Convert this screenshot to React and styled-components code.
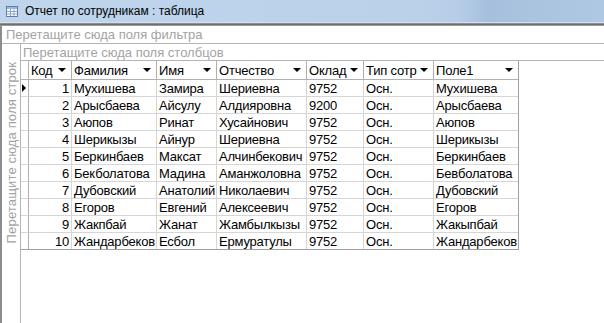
import React from "react";
import styled, { createGlobalStyle } from "styled-components";

const Global = createGlobalStyle`
  * { box-sizing: border-box; }
  html, body { margin: 0; padding: 0; background: #fff; }
  body { font-family: "Liberation Sans", Arial, sans-serif; }
`;

const Window = styled.div`
  width: 604px;
  height: 323px;
  display: flex;
  flex-direction: column;
  overflow: hidden;
  background: #fff;
`;

const TitleBar = styled.div`
  height: 23px;
  display: flex;
  align-items: center;
  gap: 7px;
  padding-left: 6px;
  font-size: 12px;
  color: #000;
  background: linear-gradient(
    to right,
    #bfd5ec 0%,
    #bad1ea 70%,
    #b6cde7 76%,
    #a5bfdc 81%,
    #a9c3df 86%,
    #aec8e3 100%
  );
  border-bottom: 1px solid #d2e2f2;
`;

const TitleRule = styled.div`
  height: 3px;
  background: linear-gradient(to bottom, #8e8e8e 0, #8e8e8e 1px, #6e6e6e 1px, #6e6e6e 2px, #9a9a9a 2px);
`;

const Body = styled.div`
  flex: 1;
  display: flex;
  flex-direction: column;
  border-left: 2px solid #8c8c8c;
  min-height: 0;
`;

const DropZone = styled.div`
  height: ${(p) => p.$h}px;
  display: flex;
  align-items: center;
  padding-left: ${(p) => p.$pad}px;
  font-size: 13px;
  color: #a3a3a3;
  white-space: nowrap;
  border-bottom: 1px solid #b4b4b4;
`;

const Main = styled.div`
  flex: 1;
  display: flex;
`;

const LeftStrip = styled.div`
  width: 19px;
  border-right: 1px solid #b4b4b4;
  display: flex;
  flex-direction: column;
`;

const Corner = styled.div`
  height: 18px;
`;

const RowZone = styled.div`
  display: flex;
  flex-direction: column;
  align-items: center;
`;

const VerticalText = styled.span`
  writing-mode: vertical-rl;
  transform: rotate(180deg);
  font-size: 13px;
  letter-spacing: 0.15px;
  color: #a3a3a3;
  white-space: nowrap;
`;

const RightArea = styled.div`
  flex: 1;
  display: flex;
  flex-direction: column;
`;

const Grid = styled.div`
  display: inline-flex;
  flex-direction: column;
  align-self: flex-start;
  border-right: 1px solid #a0a0a0;
  border-bottom: 1px solid #a0a0a0;
  font-size: 13px;
  letter-spacing: -0.2px;
  color: #000;
`;

const COLS = "8px 43px 85px 60px 90px 57px 70px 84px";

const Row = styled.div`
  display: grid;
  grid-template-columns: ${COLS};
  height: ${(p) => p.$h}px;
`;

const Cell = styled.div`
  display: flex;
  align-items: center;
  justify-content: ${(p) => (p.$right ? "flex-end" : "flex-start")};
  padding: 0 ${(p) => (p.$right ? 2 : 0)}px 0 ${(p) => (p.$right ? 0 : 2)}px;
  border-right: ${(p) => (p.$last ? "none" : "1px solid #d6d6d6")};
  border-bottom: ${(p) => (p.$lastRow ? "none" : "1px solid #d6d6d6")};
  white-space: nowrap;
  overflow: hidden;
`;

const HeadCell = styled.div`
  display: flex;
  align-items: center;
  justify-content: space-between;
  padding: 0 5px 0 2px;
  border-right: ${(p) => (p.$last ? "none" : "1px solid #b0b0b0")};
  border-bottom: 1px solid #b0b0b0;
  white-space: nowrap;
  overflow: hidden;
`;

const DropArrow = styled.span`
  width: 0;
  height: 0;
  border-left: 4px solid transparent;
  border-right: 4px solid transparent;
  border-top: 4px solid #000;
  flex-shrink: 0;
`;

const Selector = styled.div`
  display: flex;
  align-items: center;
  justify-content: center;
  border-right: 1px solid #b0b0b0;
  border-bottom: ${(p) => (p.$lastRow ? "none" : "1px solid #d6d6d6")};
`;

const HeadSelector = styled.div`
  border-right: 1px solid #b0b0b0;
  border-bottom: 1px solid #b0b0b0;
`;

const CurrentMark = styled.span`
  width: 0;
  height: 0;
  border-top: 4px solid transparent;
  border-bottom: 4px solid transparent;
  border-left: 4px solid #000;
  margin-left: -1px;
`;

const TableIcon = () => (
  <svg width="12" height="11" viewBox="0 0 12 11">
    <rect x="0.5" y="0.5" width="11" height="10" fill="#ffffff" stroke="#5c7fae" />
    <rect x="1" y="1" width="10" height="2" fill="#9fb8d8" />
    <line x1="1" y1="5.5" x2="11" y2="5.5" stroke="#8aa6cc" />
    <line x1="1" y1="8" x2="11" y2="8" stroke="#8aa6cc" />
    <line x1="4.5" y1="3" x2="4.5" y2="10" stroke="#8aa6cc" />
    <line x1="8" y1="3" x2="8" y2="10" stroke="#8aa6cc" />
  </svg>
);

const headers = ["Код", "Фамилия", "Имя", "Отчество", "Оклад", "Тип сотр", "Поле1"];

const rows = [
  [1, "Мухишева", "Замира", "Шериевна", "9752", "Осн.", "Мухишева"],
  [2, "Арысбаева", "Айсулу", "Алдияровна", "9200", "Осн.", "Арысбаева"],
  [3, "Аюпов", "Ринат", "Хусайнович", "9752", "Осн.", "Аюпов"],
  [4, "Шерикызы", "Айнур", "Шериевна", "9752", "Осн.", "Шерикызы"],
  [5, "Беркинбаев", "Максат", "Алчинбекович", "9752", "Осн.", "Беркинбаев"],
  [6, "Бекболатова", "Мадина", "Аманжоловна", "9752", "Осн.", "Бевболатова"],
  [7, "Дубовский", "Анатолий", "Николаевич", "9752", "Осн.", "Дубовский"],
  [8, "Егоров", "Евгений", "Алексеевич", "9752", "Осн.", "Егоров"],
  [9, "Жакпбай", "Жанат", "Жамбылкызы", "9752", "Осн.", "Жакыпбай"],
  [10, "Жандарбеков", "Есбол", "Ермуратулы", "9752", "Осн.", "Жандарбеков"],
];

export default function App() {
  return (
    <Window>
      <Global />
      <TitleBar>
        <TableIcon />
        <span>Отчет по сотрудникам : таблица</span>
      </TitleBar>
      <TitleRule />
      <Body>
        <DropZone $h={18} $pad={4}>Перетащите сюда поля фильтра</DropZone>
        <Main>
          <LeftStrip>
            <Corner />
            <RowZone>
              <VerticalText>Перетащите сюда поля строк</VerticalText>
            </RowZone>
          </LeftStrip>
          <RightArea>
            <DropZone $h={17} $pad={2}>Перетащите сюда поля столбцов</DropZone>
            <Grid>
              <Row $h={19}>
                <HeadSelector />
                {headers.map((h, i) => (
                  <HeadCell key={h} $last={i === headers.length - 1}>
                    <span>{h}</span>
                    <DropArrow />
                  </HeadCell>
                ))}
              </Row>
              {rows.map((r, ri) => {
                const lastRow = ri === rows.length - 1;
                return (
                  <Row key={ri} $h={lastRow ? 16 : 17}>
                    <Selector $lastRow={lastRow}>{ri === 0 && <CurrentMark />}</Selector>
                    {r.map((v, ci) => (
                      <Cell
                        key={ci}
                        $right={ci === 0}
                        $last={ci === r.length - 1}
                        $lastRow={lastRow}
                      >
                        {v}
                      </Cell>
                    ))}
                  </Row>
                );
              })}
            </Grid>
          </RightArea>
        </Main>
      </Body>
    </Window>
  );
}
